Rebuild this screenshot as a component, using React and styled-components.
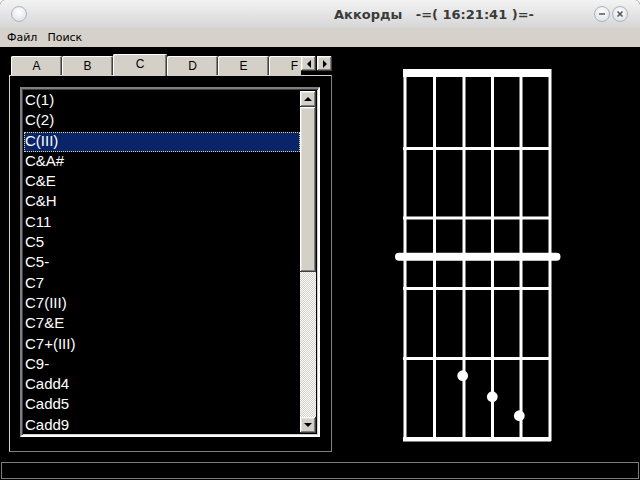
import styled, { createGlobalStyle, css } from "styled-components";

const GlobalStyle = createGlobalStyle`
  html, body {
    margin: 0;
    padding: 0;
    background: #fff;
  }
`;

const chords = [
  "C(1)",
  "C(2)",
  "C(III)",
  "C&A#",
  "C&E",
  "C&H",
  "C11",
  "C5",
  "C5-",
  "C7",
  "C7(III)",
  "C7&E",
  "C7+(III)",
  "C9-",
  "Cadd4",
  "Cadd5",
  "Cadd9",
];
const letters = ["A", "B", "C", "D", "E", "F"];

const raised = css`
  background: #d4d0c8;
  box-shadow: inset -1px -1px #404040, inset 1px 1px #ffffff,
    inset -2px -2px #808080, inset 2px 2px #e4e2dc;
`;

const Window = styled.div`
  width: 640px;
  height: 480px;
  display: flex;
  flex-direction: column;
  background: #000;
  overflow: hidden;
  border-radius: 5px 5px 0 0;
`;
const TitleBar = styled.div`
  height: 28px;
  display: flex;
  align-items: center;
  padding: 0 12px 0 11px;
  background: linear-gradient(#f3f3f3, #d6d6d6);
  font: bold 13px "DejaVu Sans", sans-serif;
  color: #3a3a3a;
`;
const Title = styled.span`
  margin-left: 307px;
  white-space: pre;
`;
const Controls = styled.div`
  margin-left: auto;
  display: flex;
  gap: 2px;
`;
const RoundButton = styled.div`
  width: 16px;
  height: 16px;
  box-sizing: border-box;
  border-radius: 50%;
  border: 1px solid #aab4c4;
  background: radial-gradient(circle at 50% 35%, #ffffff, #d8dce2);
  display: flex;
  align-items: center;
  justify-content: center;
`;
const MenuBar = styled.div`
  height: 19px;
  display: flex;
  align-items: center;
  padding-left: 2px;
  background: #d6d2cb;
  font: 11px "DejaVu Sans", sans-serif;
  color: #000;
`;
const MenuItem = styled.span`
  padding: 0 5px;
`;
const Body = styled.div`
  flex: 1;
  display: flex;
  flex-direction: column;
`;
const Main = styled.div`
  flex: 1;
  display: flex;
  align-items: flex-start;
`;
const LeftCol = styled.div`
  width: 323px;
  margin-left: 9px;
  padding-top: 7px;
`;
const TabHeader = styled.div`
  position: relative;
  z-index: 1;
  display: flex;
  height: 22px;
  margin-bottom: -1px;
  padding-left: 2px;
`;
const TabsViewport = styled.div`
  width: 291px;
  display: flex;
  align-items: flex-start;
  overflow: hidden;
`;
const Tab = styled.div`
  flex: none;
  box-sizing: border-box;
  width: ${(p) => (p.$active ? 54 : 51)}px;
  height: ${(p) => (p.$active ? 22 : 19)}px;
  margin-top: ${(p) => (p.$active ? 0 : 2)}px;
  background: #d4d0c8;
  border-radius: 2px 2px 0 0;
  box-shadow: inset 1px 1px #ffffff, inset -1px 0 #404040, inset -2px 0 #808080;
  display: flex;
  justify-content: center;
  padding-top: ${(p) => (p.$active ? 3 : 3)}px;
  font: 12px "Liberation Sans", sans-serif;
  color: #000;
`;
const ArrowButtons = styled.div`
  display: flex;
  gap: 1px;
  margin-top: 2px;
`;
const ArrowButton = styled.div`
  ${raised};
  width: 15px;
  height: 15px;
  display: flex;
  align-items: center;
  justify-content: center;
  &::after {
    content: "";
    border-style: solid;
    border-color: transparent;
    ${(p) =>
      p.$dir === "left" &&
      css`
        border-width: 4px 4px 4px 0;
        border-right-color: #000;
      `}
    ${(p) =>
      p.$dir === "right" &&
      css`
        border-width: 4px 0 4px 4px;
        border-left-color: #000;
      `}
    ${(p) =>
      p.$dir === "up" &&
      css`
        border-width: 0 4px 4px 4px;
        border-bottom-color: #000;
      `}
    ${(p) =>
      p.$dir === "down" &&
      css`
        border-width: 4px 4px 0 4px;
        border-top-color: #000;
      `}
  }
`;
const Panel = styled.div`
  height: 377px;
  box-sizing: border-box;
  border: 1px solid;
  border-color: #d4d0c8 #808080 #808080 #d4d0c8;
  padding: 11px 0 0 10px;
`;
const ListBox = styled.div`
  width: 300px;
  height: 350px;
  box-sizing: border-box;
  border: 2px solid;
  border-color: #808080 #ffffff #ffffff #808080;
  box-shadow: inset 1px 1px #404040, inset -1px -1px #d4d0c8;
  padding: 2px;
  display: flex;
`;
const Items = styled.div`
  flex: 1;
  overflow: hidden;
`;
const Row = styled.div`
  height: 20.3px;
  line-height: 20.3px;
  padding-left: 1px;
  font: 15px "Liberation Sans", sans-serif;
  color: #fff;
  white-space: nowrap;
  ${(p) =>
    p.$selected &&
    css`
      background: #0a246a;
      outline: 1px dotted #e0d48c;
      outline-offset: -1px;
    `}
`;
const ScrollBar = styled.div`
  width: 16px;
  display: flex;
  flex-direction: column;
`;
const Thumb = styled.div`
  ${raised};
  height: 165px;
`;
const Track = styled.div`
  flex: 1;
  background: repeating-conic-gradient(#d4d0c8 0 25%, #ffffff 0 50%) 0 0 / 2px 2px;
`;
const StatusBar = styled.div`
  height: 17px;
  box-sizing: border-box;
  margin: 0 1px 1px 1px;
  border: 1px solid #7c7c7c;
`;
const Fretboard = styled.svg`
  flex: none;
  margin: 13px 0 0 58px;
`;

const strings = [15, 44.5, 74, 102.5, 131, 160];
const frets = [87, 156.5, 227, 297];
const dots = [
  [72.7, 315.7],
  [102.3, 336.7],
  [129.3, 355.7],
];

function ChordDiagram() {
  return (
    <Fretboard width="180" height="390" viewBox="0 0 180 390">
      {strings.map((x) => (
        <line key={x} x1={x} y1="9" x2={x} y2="381" stroke="#fff" strokeWidth="3" />
      ))}
      <rect x="13" y="9" width="148" height="8" fill="#fff" />
      {frets.map((y) => (
        <rect key={y} x="13" y={y} width="148" height="3" fill="#fff" />
      ))}
      <rect x="13" y="377" width="148" height="4.5" fill="#fff" />
      <line x1="9" y1="196.7" x2="166.5" y2="196.7" stroke="#fff" strokeWidth="8" strokeLinecap="round" />
      {dots.map(([x, y]) => (
        <circle key={x} cx={x} cy={y} r="5.4" fill="#fff" />
      ))}
    </Fretboard>
  );
}

export default function App() {
  return (
    <>
      <GlobalStyle />
      <Window>
        <TitleBar>
          <RoundButton />
          <Title>Аккорды   -=( 16:21:41 )=-</Title>
          <Controls>
            <RoundButton>
              <svg width="8" height="8" viewBox="0 0 8 8">
                <line x1="1" y1="4" x2="7" y2="4" stroke="#555" strokeWidth="1.6" />
              </svg>
            </RoundButton>
            <RoundButton>
              <svg width="8" height="8" viewBox="0 0 8 8">
                <path d="M1.5 1.5L6.5 6.5M6.5 1.5L1.5 6.5" stroke="#555" strokeWidth="1.6" />
              </svg>
            </RoundButton>
          </Controls>
        </TitleBar>
        <MenuBar>
          <MenuItem>Файл</MenuItem>
          <MenuItem>Поиск</MenuItem>
        </MenuBar>
        <Body>
          <Main>
            <LeftCol>
              <TabHeader>
                <TabsViewport>
                  {letters.map((l) => (
                    <Tab key={l} $active={l === "C"}>
                      {l}
                    </Tab>
                  ))}
                </TabsViewport>
                <ArrowButtons>
                  <ArrowButton $dir="left" />
                  <ArrowButton $dir="right" />
                </ArrowButtons>
              </TabHeader>
              <Panel>
                <ListBox>
                  <Items>
                    {chords.map((c) => (
                      <Row key={c} $selected={c === "C(III)"}>
                        {c}
                      </Row>
                    ))}
                  </Items>
                  <ScrollBar>
                    <ArrowButton $dir="up" style={{ width: 16, height: 16 }} />
                    <Thumb />
                    <Track />
                    <ArrowButton $dir="down" style={{ width: 16, height: 16 }} />
                  </ScrollBar>
                </ListBox>
              </Panel>
            </LeftCol>
            <ChordDiagram />
          </Main>
          <StatusBar />
        </Body>
      </Window>
    </>
  );
}
